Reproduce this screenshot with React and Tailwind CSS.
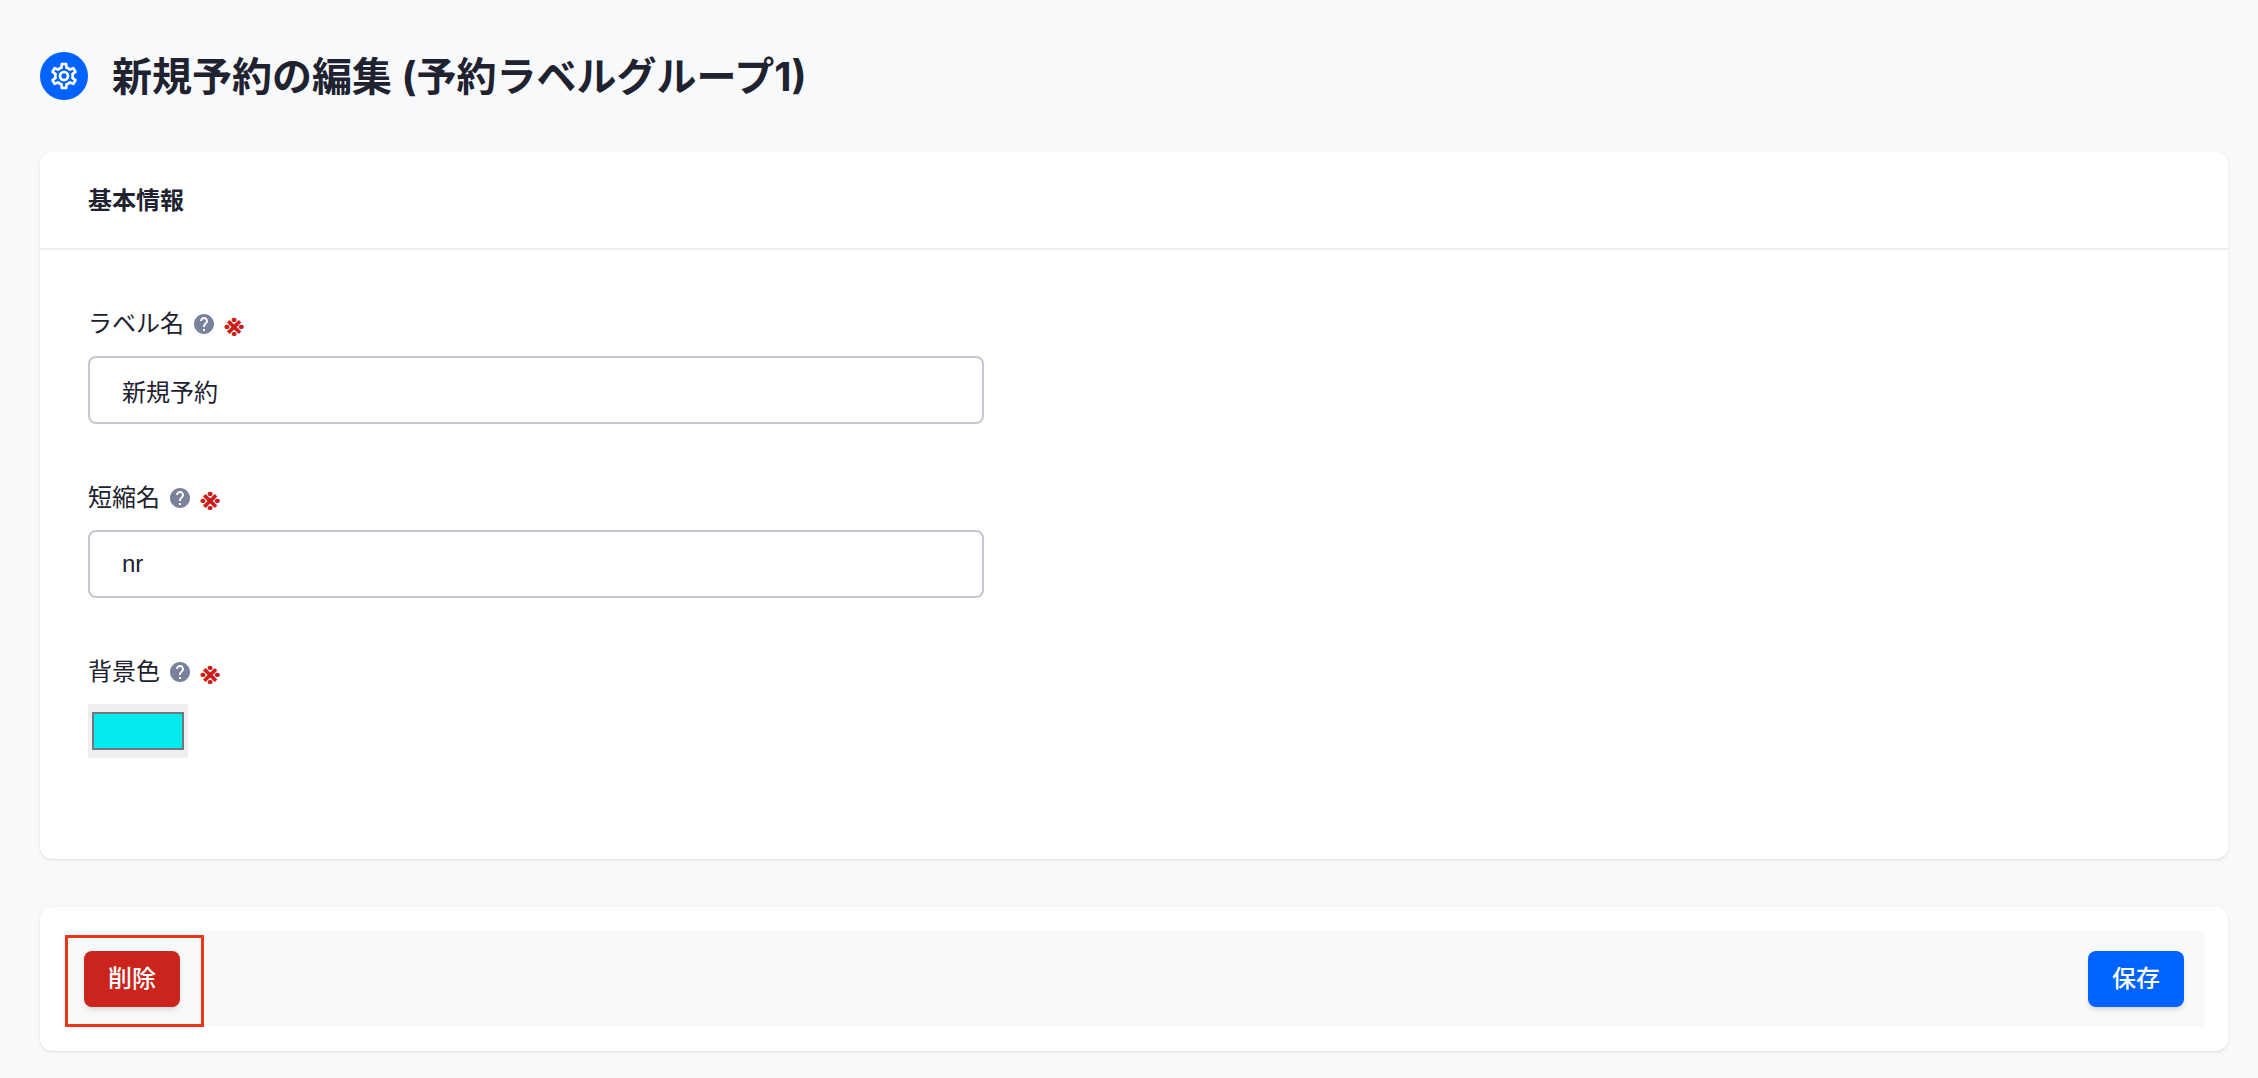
import { useState } from 'react'
import { MdHelp, MdOutlineSettings } from 'react-icons/md'

function FieldLabel({ htmlFor, children }) {
  return (
    <div className="flex items-center h-9 mb-3.5">
      <label htmlFor={htmlFor}>{children}</label>
      <button type="button" aria-label="ヘルプ" className="ml-2 text-[#7a819b]">
        <MdHelp className="size-6" />
      </button>
      <span className="ml-1.5 mt-1 text-3xl leading-8 font-bold text-[#cb1e1a] font-[Inter,'Noto_Sans_CJK_JP',sans-serif]">※</span>
    </div>
  )
}

function TextField({ id, label, value, onChange }) {
  return (
    <div className="mb-14">
      <FieldLabel htmlFor={id}>{label}</FieldLabel>
      <input
        id={id}
        type="text"
        value={value}
        onChange={(e) => onChange(e.target.value)}
        className="block w-full max-w-4xl h-17 px-8 bg-white border-2 border-[#c6c6d0] rounded-lg outline-none focus:border-[#0062ff]"
      />
    </div>
  )
}

export default function App() {
  const [name, setName] = useState('新規予約')
  const [shortName, setShortName] = useState('nr')
  const [color, setColor] = useState('#05eaef')

  return (
    <main
      lang="ja"
      className="min-h-screen bg-[#f7f9fb] pl-10 pr-[30px] pt-12 pb-7 text-2xl text-[#20222f] font-['Liberation_Sans','Noto_Sans_CJK_JP',sans-serif]"
    >
      <header className="flex items-center gap-6 h-14 mb-12">
        <span className="flex items-center justify-center size-12 rounded-full bg-[#0062ff] text-white">
          <MdOutlineSettings className="size-8" />
        </span>
        <h1 className="pt-0.5 text-[40px] leading-14 font-bold font-[Inter,'Noto_Sans_CJK_JP',sans-serif]">
          新規予約の編集 (予約ラベルグループ1)
        </h1>
      </header>

      <form onSubmit={(e) => e.preventDefault()}>
        <section className="bg-white rounded-xl shadow-sm">
          <h2 className="flex items-center h-[98px] pt-0.5 px-12 border-b-2 border-[#eceef1] font-bold">基本情報</h2>
          <div className="px-12 pt-14 pb-[101px]">
            <TextField id="name" label="ラベル名" value={name} onChange={setName} />
            <TextField id="short-name" label="短縮名" value={shortName} onChange={setShortName} />
            <FieldLabel htmlFor="color">背景色</FieldLabel>
            <input
              id="color"
              type="color"
              value={color}
              onChange={(e) => setColor(e.target.value)}
              className="block w-[100px] h-[54px] px-1 py-2 bg-[#efefef] [&::-webkit-color-swatch-wrapper]:p-0 [&::-webkit-color-swatch]:border-2 [&::-webkit-color-swatch]:border-[#6f7780]"
            />
          </div>
        </section>

        <section className="mt-12 p-6 bg-white rounded-xl shadow">
          <div className="flex justify-between p-5 bg-[#f7f9fb]">
            <div className="relative">
              <button
                type="button"
                className="w-24 h-14 rounded-lg bg-[#cb241d] text-white font-medium shadow-md"
              >
                削除
              </button>
              <span className="absolute -top-4 -bottom-5 -left-[19px] -right-6 border-3 border-[#f03614] pointer-events-none" />
            </div>
            <button
              type="submit"
              className="w-24 h-14 rounded-lg bg-[#0062ff] text-white font-medium shadow-md"
            >
              保存
            </button>
          </div>
        </section>
      </form>
    </main>
  )
}
